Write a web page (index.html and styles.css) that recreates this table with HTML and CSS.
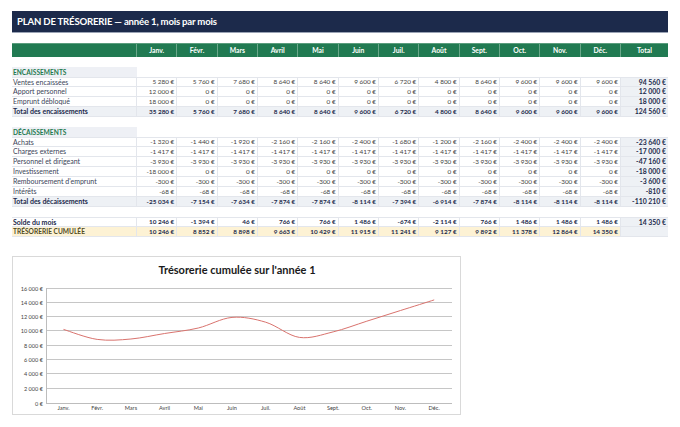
FILE: index.html
```html
<!DOCTYPE html>
<html lang="fr">
<head>
<meta charset="utf-8">
<title>Plan de trésorerie</title>
<link rel="stylesheet" href="styles.css">
</head>
<body>
<div class="page">
  <div class="title">PLAN DE TRÉSORERIE — année 1, mois par mois</div>

  <div class="row head">
    <div class="c lab"></div>
    <div class="c">Janv.</div><div class="c">Févr.</div><div class="c">Mars</div><div class="c">Avril</div>
    <div class="c">Mai</div><div class="c">Juin</div><div class="c">Juil.</div><div class="c">Août</div>
    <div class="c">Sept.</div><div class="c">Oct.</div><div class="c">Nov.</div><div class="c">Déc.</div>
    <div class="c">Total</div>
  </div>

  <div class="group">
    <div class="row sec"><div class="c lab">ENCAISSEMENTS</div></div>
    <div class="row data first">
      <div class="c lab">Ventes encaissées</div>
      <div class="c">5 280 €</div><div class="c">5 760 €</div><div class="c">7 680 €</div><div class="c">8 640 €</div><div class="c">8 640 €</div><div class="c">9 600 €</div><div class="c">6 720 €</div><div class="c">4 800 €</div><div class="c">8 640 €</div><div class="c">9 600 €</div><div class="c">9 600 €</div><div class="c">9 600 €</div>
      <div class="c tot">94 560 €</div>
    </div>
    <div class="row data">
      <div class="c lab">Apport personnel</div>
      <div class="c">12 000 €</div><div class="c">0 €</div><div class="c">0 €</div><div class="c">0 €</div><div class="c">0 €</div><div class="c">0 €</div><div class="c">0 €</div><div class="c">0 €</div><div class="c">0 €</div><div class="c">0 €</div><div class="c">0 €</div><div class="c">0 €</div>
      <div class="c tot">12 000 €</div>
    </div>
    <div class="row data">
      <div class="c lab">Emprunt débloqué</div>
      <div class="c">18 000 €</div><div class="c">0 €</div><div class="c">0 €</div><div class="c">0 €</div><div class="c">0 €</div><div class="c">0 €</div><div class="c">0 €</div><div class="c">0 €</div><div class="c">0 €</div><div class="c">0 €</div><div class="c">0 €</div><div class="c">0 €</div>
      <div class="c tot">18 000 €</div>
    </div>
    <div class="row data total">
      <div class="c lab">Total des encaissements</div>
      <div class="c">35 280 €</div><div class="c">5 760 €</div><div class="c">7 680 €</div><div class="c">8 640 €</div><div class="c">8 640 €</div><div class="c">9 600 €</div><div class="c">6 720 €</div><div class="c">4 800 €</div><div class="c">8 640 €</div><div class="c">9 600 €</div><div class="c">9 600 €</div><div class="c">9 600 €</div>
      <div class="c tot">124 560 €</div>
    </div>
  </div>

  <div class="group">
    <div class="row sec"><div class="c lab">DÉCAISSEMENTS</div></div>
    <div class="row data first">
      <div class="c lab">Achats</div>
      <div class="c">-1 320 €</div><div class="c">-1 440 €</div><div class="c">-1 920 €</div><div class="c">-2 160 €</div><div class="c">-2 160 €</div><div class="c">-2 400 €</div><div class="c">-1 680 €</div><div class="c">-1 200 €</div><div class="c">-2 160 €</div><div class="c">-2 400 €</div><div class="c">-2 400 €</div><div class="c">-2 400 €</div>
      <div class="c tot">-23 640 €</div>
    </div>
    <div class="row data">
      <div class="c lab">Charges externes</div>
      <div class="c">-1 417 €</div><div class="c">-1 417 €</div><div class="c">-1 417 €</div><div class="c">-1 417 €</div><div class="c">-1 417 €</div><div class="c">-1 417 €</div><div class="c">-1 417 €</div><div class="c">-1 417 €</div><div class="c">-1 417 €</div><div class="c">-1 417 €</div><div class="c">-1 417 €</div><div class="c">-1 417 €</div>
      <div class="c tot">-17 000 €</div>
    </div>
    <div class="row data">
      <div class="c lab">Personnel et dirigeant</div>
      <div class="c">-3 930 €</div><div class="c">-3 930 €</div><div class="c">-3 930 €</div><div class="c">-3 930 €</div><div class="c">-3 930 €</div><div class="c">-3 930 €</div><div class="c">-3 930 €</div><div class="c">-3 930 €</div><div class="c">-3 930 €</div><div class="c">-3 930 €</div><div class="c">-3 930 €</div><div class="c">-3 930 €</div>
      <div class="c tot">-47 160 €</div>
    </div>
    <div class="row data">
      <div class="c lab">Investissement</div>
      <div class="c">-18 000 €</div><div class="c">0 €</div><div class="c">0 €</div><div class="c">0 €</div><div class="c">0 €</div><div class="c">0 €</div><div class="c">0 €</div><div class="c">0 €</div><div class="c">0 €</div><div class="c">0 €</div><div class="c">0 €</div><div class="c">0 €</div>
      <div class="c tot">-18 000 €</div>
    </div>
    <div class="row data">
      <div class="c lab">Remboursement d'emprunt</div>
      <div class="c">-300 €</div><div class="c">-300 €</div><div class="c">-300 €</div><div class="c">-300 €</div><div class="c">-300 €</div><div class="c">-300 €</div><div class="c">-300 €</div><div class="c">-300 €</div><div class="c">-300 €</div><div class="c">-300 €</div><div class="c">-300 €</div><div class="c">-300 €</div>
      <div class="c tot">-3 600 €</div>
    </div>
    <div class="row data">
      <div class="c lab">Intérêts</div>
      <div class="c">-68 €</div><div class="c">-68 €</div><div class="c">-68 €</div><div class="c">-68 €</div><div class="c">-68 €</div><div class="c">-68 €</div><div class="c">-68 €</div><div class="c">-68 €</div><div class="c">-68 €</div><div class="c">-68 €</div><div class="c">-68 €</div><div class="c">-68 €</div>
      <div class="c tot">-810 €</div>
    </div>
    <div class="row data total">
      <div class="c lab">Total des décaissements</div>
      <div class="c">-25 034 €</div><div class="c">-7 154 €</div><div class="c">-7 634 €</div><div class="c">-7 874 €</div><div class="c">-7 874 €</div><div class="c">-8 114 €</div><div class="c">-7 394 €</div><div class="c">-6 914 €</div><div class="c">-7 874 €</div><div class="c">-8 114 €</div><div class="c">-8 114 €</div><div class="c">-8 114 €</div>
      <div class="c tot">-110 210 €</div>
    </div>
  </div>

  <div class="group last">
    <div class="row data first solde">
      <div class="c lab">Solde du mois</div>
      <div class="c">10 246 €</div><div class="c">-1 394 €</div><div class="c">46 €</div><div class="c">766 €</div><div class="c">766 €</div><div class="c">1 486 €</div><div class="c">-674 €</div><div class="c">-2 114 €</div><div class="c">766 €</div><div class="c">1 486 €</div><div class="c">1 486 €</div><div class="c">1 486 €</div>
      <div class="c tot">14 350 €</div>
    </div>
    <div class="row data cumul">
      <div class="c lab">TRÉSORERIE CUMULÉE</div>
      <div class="c">10 246 €</div><div class="c">8 852 €</div><div class="c">8 898 €</div><div class="c">9 663 €</div><div class="c">10 429 €</div><div class="c">11 915 €</div><div class="c">11 241 €</div><div class="c">9 127 €</div><div class="c">9 892 €</div><div class="c">11 378 €</div><div class="c">12 864 €</div><div class="c">14 350 €</div>
      <div class="c tot"></div>
    </div>
  </div>

  <div class="chart">
    <svg class="chart-svg" width="449" height="159" viewBox="12 256 449 159" xmlns="http://www.w3.org/2000/svg">
      <text class="ctitle" x="237" y="274" text-anchor="middle">Trésorerie cumulée sur l'année 1</text>
      <g class="grid">
        <line x1="46" x2="452" y1="288.5" y2="288.5"/>
        <line x1="46" x2="452" y1="302.5" y2="302.5"/>
        <line x1="46" x2="452" y1="316.5" y2="316.5"/>
        <line x1="46" x2="452" y1="330.5" y2="330.5"/>
        <line x1="46" x2="452" y1="345.5" y2="345.5"/>
        <line x1="46" x2="452" y1="359.5" y2="359.5"/>
        <line x1="46" x2="452" y1="373.5" y2="373.5"/>
        <line x1="46" x2="452" y1="388.5" y2="388.5"/>
      </g>
      <line class="axis" x1="46" x2="452" y1="403.5" y2="403.5"/>
      <line class="axis" x1="46.5" x2="46.5" y1="288" y2="404"/>
      <g class="ylab" text-anchor="end">
        <text x="43" y="290.5">16 000 €</text>
        <text x="43" y="304.5">14 000 €</text>
        <text x="43" y="318.5">12 000 €</text>
        <text x="43" y="332.5">10 000 €</text>
        <text x="43" y="347.5">8 000 €</text>
        <text x="43" y="361.5">6 000 €</text>
        <text x="43" y="375.5">4 000 €</text>
        <text x="43" y="390.5">2 000 €</text>
        <text x="43" y="405.5">0 €</text>
      </g>
      <g class="xlab" text-anchor="middle">
        <text x="63.5" y="410">Janv.</text>
        <text x="97.2" y="410">Févr.</text>
        <text x="130.9" y="410">Mars</text>
        <text x="164.6" y="410">Avril</text>
        <text x="198.3" y="410">Mai</text>
        <text x="232" y="410">Juin</text>
        <text x="265.7" y="410">Juil.</text>
        <text x="299.4" y="410">Août</text>
        <text x="333.1" y="410">Sept.</text>
        <text x="366.8" y="410">Oct.</text>
        <text x="400.5" y="410">Nov.</text>
        <text x="434.2" y="410">Déc.</text>
      </g>
      <path class="curve" d="M63.5 329.4 C69.1 331.1 86.0 337.8 97.2 339.4 C108.4 341.0 119.7 340.0 130.9 339.0 C142.1 338.0 153.4 335.3 164.6 333.5 C175.8 331.7 187.1 330.7 198.3 328.0 C209.5 325.3 220.8 318.4 232.0 317.4 C243.2 316.4 254.5 318.9 265.7 322.2 C276.9 325.5 288.2 335.8 299.4 337.4 C310.6 339.0 321.9 334.6 333.1 331.9 C344.3 329.2 355.6 324.8 366.8 321.2 C378.0 317.6 389.3 314.1 400.5 310.5 C411.7 307.0 428.6 301.7 434.2 299.9"/>
    </svg>
  </div>
</div>
</body>
</html>
```

FILE: styles.css
```css
html, body {
  margin: 0;
  padding: 0;
  background: #ffffff;
}
body {
  font-family: Lato, "Open Sans", "Liberation Sans", sans-serif;
  color: #444;
}
.page {
  padding: 11px 12px 0 12px;
  width: 656px;
}
.title {
  height: 22px;
  background: #1c2a4b;
  color: #fff;
  font-weight: 700;
  font-size: 9.6px;
  letter-spacing: -0.2px;
  line-height: 22px;
  padding-left: 5px;
  border-bottom: 1px solid #9aa3b5;
  box-sizing: border-box;
}
.row {
  display: grid;
  grid-template-columns: 125px repeat(12, 1fr) 47px;
  height: 10px;
}
.c {
  box-sizing: border-box;
  font-size: 6.4px;
  line-height: 9px;
  text-align: right;
  padding-right: 2px;
  white-space: nowrap;
  overflow: hidden;
}
.head {
  margin-top: 10px;
  height: 14px;
  background: #217a52;
  border-top: 1px solid #5b9d7e;
  box-sizing: border-box;
}
.head .c {
  color: #fff;
  font-weight: 700;
  font-size: 6.8px;
  line-height: 13px;
  text-align: center;
  padding: 0;
  border-right: 1px solid #6aa78a;
}
.head .c:last-child {
  border-right: none;
}
.group {
  margin-top: 10px;
}
.sec .c.lab {
  background: #eef0f5;
  color: #1e7a50;
  font-weight: 700;
  font-size: 6.6px;
  line-height: 10px;
  text-align: left;
  padding-left: 1px;
}
.data .c {
  border-right: 1px solid #e3e6ec;
  border-bottom: 1px solid #e3e6ec;
}
.data.first .c {
  border-top: 1px solid #e3e6ec;
  line-height: 8px;
}
.data .c.lab {
  text-align: left;
  font-size: 7px;
  color: #3a4458;
  padding-left: 1px;
}
.data .c.tot {
  background: #eef1f5;
  color: #1c2a4b;
  font-weight: 700;
  font-size: 6.9px;
  border-right: none;
}
.total .c {
  background: #eef1f5;
  color: #1c2a4b;
  font-weight: 700;
}
.total .c.lab,
.solde .c.lab {
  color: #1c2a4b;
  font-weight: 700;
}
.solde .c {
  color: #1c2a4b;
  font-weight: 700;
}
.cumul .c {
  background: #fdf2d4;
  color: #1c2a4b;
  font-weight: 700;
}
.cumul .c.lab {
  color: #4f4a1e;
  font-weight: 700;
  font-size: 6.6px;
}
.cumul .c.tot {
  background: #eef1f5;
}
.chart {
  margin-top: 19px;
  width: 449px;
  height: 159px;
  border: 1px solid #d9d9d9;
  box-sizing: border-box;
  overflow: hidden;
}
.chart-svg {
  display: block;
  margin: -1px 0 0 -1px;
}
.ctitle {
  font-family: Lato, "Open Sans", sans-serif;
  font-weight: 700;
  font-size: 11px;
  fill: #1a1a1a;
}
.grid line {
  stroke: #c6c6c6;
  stroke-width: 1;
}
.axis {
  stroke: #bdbdbd;
  stroke-width: 1;
}
.ylab text,
.xlab text {
  font-family: Lato, "Open Sans", sans-serif;
  font-size: 5.6px;
  fill: #444;
}
.curve {
  fill: none;
  stroke: #d9736e;
  stroke-width: 1;
}
```
